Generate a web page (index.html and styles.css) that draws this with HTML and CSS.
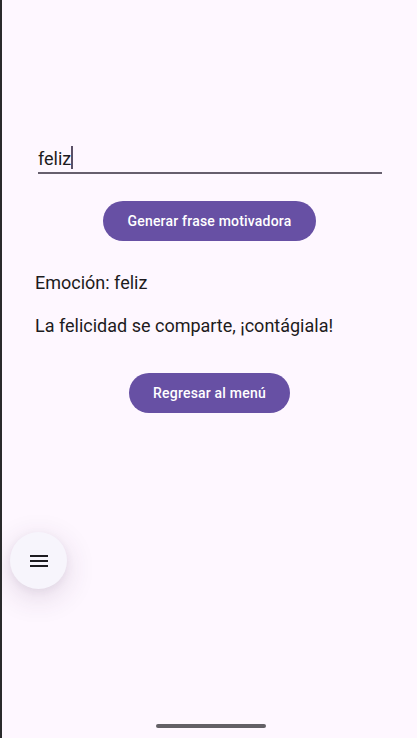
FILE: index.html
```html
<!DOCTYPE html>
<html lang="es">
<head>
<meta charset="utf-8">
<link rel="stylesheet" href="styles.css">
</head>
<body>
<div class="screen">
  <main class="content">
    <div class="field">
      <span class="field-text">feliz</span><span class="caret"></span>
    </div>
    <div class="center">
      <button class="btn btn-generate">Generar frase motivadora</button>
    </div>
    <p class="emotion">Emoción: feliz</p>
    <p class="phrase">La felicidad se comparte, ¡contágiala!</p>
    <div class="center">
      <button class="btn btn-back">Regresar al menú</button>
    </div>
  </main>
  <button class="fab" aria-label="Menú">
    <svg width="18" height="12" viewBox="0 0 18 12"><rect x="0" y="0" width="18" height="2" fill="#1d1b20"/><rect x="0" y="5" width="18" height="2" fill="#1d1b20"/><rect x="0" y="10" width="18" height="2" fill="#1d1b20"/></svg>
  </button>
  <div class="home-indicator"></div>
</div>
</body>
</html>
```
FILE: styles.css
```css
html, body {
  margin: 0;
  padding: 0;
}
body {
  background: #fef7ff;
  font-family: Roboto, "Noto Sans", sans-serif;
  color: #1d1b20;
}
.screen {
  position: relative;
  width: 417px;
  height: 738px;
  box-sizing: border-box;
  border-left: 2px solid #2a2a2c;
  overflow: hidden;
}
.content {
  padding: 145px 35px 0 33px;
  display: flex;
  flex-direction: column;
}
.field {
  margin-left: 3px;
  height: 29px;
  border-bottom: 2px solid #675f6e;
  display: flex;
  align-items: flex-end;
  padding-bottom: 2px;
  box-sizing: border-box;
}
.field-text {
  font-size: 18px;
  line-height: 22px;
  color: #1d1b20;
}
.caret {
  display: inline-block;
  width: 1.5px;
  height: 23px;
  background: #5a5066;
  margin-left: 0;
  margin-bottom: 1px;
}
.center {
  display: flex;
  justify-content: center;
}
.btn {
  border: none;
  background: #6750a4;
  color: #ffffff;
  font-family: Roboto, "Noto Sans", sans-serif;
  font-weight: 500;
  font-size: 14px;
  letter-spacing: 0.2px;
  height: 40px;
  border-radius: 20px;
  padding: 0 24px;
}
.btn-generate {
  margin-top: 27px;
  margin-left: 2px;
}
.btn-back {
  margin-left: 2px;
}
.emotion {
  margin: 30px 0 0 0;
  font-size: 18px;
  line-height: 24px;
}
.phrase {
  margin: 19px 0 35px 0;
  font-size: 18px;
  line-height: 24px;
}
.fab {
  position: absolute;
  left: 8px;
  top: 532px;
  width: 57px;
  height: 57px;
  border-radius: 50%;
  border: none;
  background: #f7f5fc;
  box-shadow: 0 8px 30px rgba(70, 40, 80, 0.16), 0 2px 8px rgba(70, 40, 80, 0.06);
  display: flex;
  align-items: center;
  justify-content: center;
  padding: 0;
}
.home-indicator {
  position: absolute;
  left: 154px;
  top: 724px;
  width: 110px;
  height: 4px;
  border-radius: 2px;
  background: #636066;
}
```
